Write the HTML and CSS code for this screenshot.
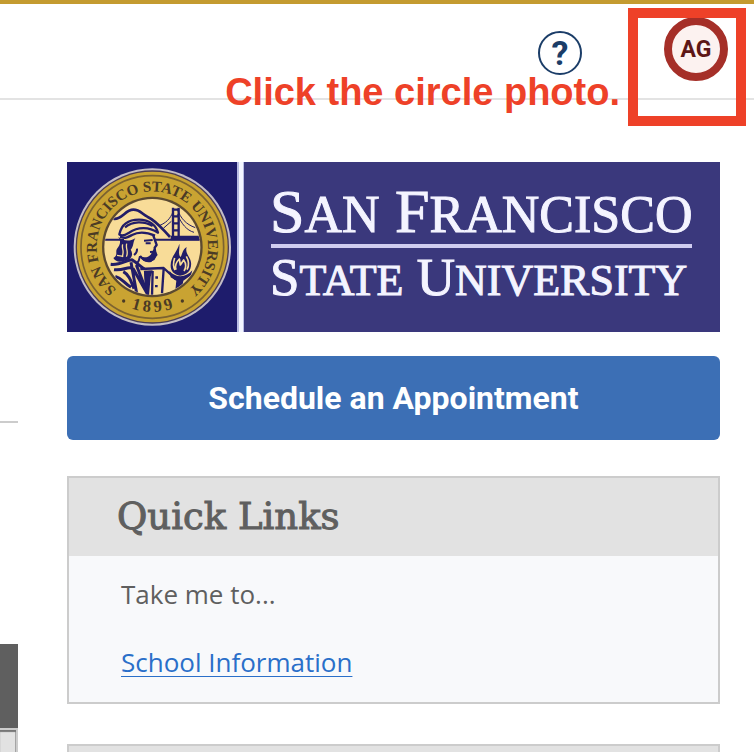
FILE: index.html
```html
<!DOCTYPE html>
<html lang="en">

<head>
    <meta charset="UTF-8">
    <meta name="viewport" content="width=device-width, initial-scale=1.0">
    <title>Home</title>
    <link rel="stylesheet" href="styles.css">
</head>

<body>

    <!-- top bar -->

    <header class="topbar">
        <button class="help" type="button" aria-label="Help">?</button>
        <button class="avatar" type="button" aria-label="Account menu">AG</button>
    </header>

    <!-- instructions over the top bar -->

    <p class="callout">Click the circle photo.</p>
    <div class="highlight"></div>

    <div class="page">

        <!-- end of the main column -->

        <main class="content">
            <div class="rule"></div>
            <div class="table-head"></div>
            <div class="table-body"></div>
        </main>

        <aside class="sidebar">
            <svg class="logo" viewBox="0 0 653 170" role="img" aria-label="San Francisco State University">
                <rect width="653" height="170" fill="#3a387c" />
                <rect width="170" height="170" fill="#1e1c6c" />
                <rect x="170" width="7" height="170" fill="#b9bde4" />
                <rect x="172" width="4" height="170" fill="#f4f6ff" />

                <!-- seal -->
                <svg x="-7" y="-7" width="190" height="185" viewBox="0 0 570 555">
                    <defs>
                        <path id="ring" d="M181 413A167 167 0 1 1 373 413" />
                        <path id="ring-low" d="M82 276A195 195 0 0 0 472 276" />
                        <clipPath id="inside">
                            <circle cx="277" cy="276" r="143" />
                        </clipPath>
                    </defs>
                    <circle cx="277" cy="276" r="236" fill="#c3bcc6" />
                    <circle cx="277" cy="276" r="230" fill="#4b3c55" />
                    <circle cx="277" cy="276" r="226" fill="#c9a332" />
                    <circle cx="277" cy="276" r="214" fill="none" stroke="#7c6330" stroke-width="5" />
                    <circle cx="277" cy="276" r="151" fill="#5b4930" />
                    <circle cx="277" cy="276" r="144" fill="#f8dc98" />
                    <g clip-path="url(#inside)" fill="none" stroke="#221d68" stroke-linejoin="round">
                        <path d="M125 254H192M285 254H425" stroke-width="6" />
                        <path d="M160 191C185 196 195 164 220 164C240 164 245 176 262 185C290 198 305 220 330 246" stroke-width="8" />
                        <path d="M300 211C325 200 334 185 342 163M352 163C362 190 378 208 406 218M352 178C365 207 380 226 402 232M310 220L334 199" stroke-width="3" />
                        <path d="M339 158V254M356 158V254M337 164H358M337 184H358M337 205H358M337 226H358" stroke-width="7" />
                        <path d="M332 242H422V256H332Z" fill="#221d68" stroke="none" />
                        <!-- helmet and hair -->
                        <path d="M178 238C184 210 205 194 237 194C268 194 288 211 294 233C268 216 235 214 207 233C196 240 184 244 178 238Z" fill="#f8dc98" stroke-width="7" />
                        <path d="M195 217C218 198 252 198 278 213M180 245C196 252 205 246 216 240C240 227 264 233 285 242" stroke-width="7" />
                        <path d="M174 246C186 260 178 271 172 280C164 292 176 299 160 309C170 326 189 319 202 315C220 309 218 292 212 284C222 275 218 262 226 250C208 261 190 258 174 246Z" fill="#221d68" stroke="none" />
                        <path d="M188 268C184 283 195 286 186 306M200 266C196 282 207 290 199 305M171 301L190 304" stroke="#f8dc98" stroke-width="4" />
                        <!-- face and neck -->
                        <path d="M280 242L290 270L284 278L286 297C286 308 280 316 267 316C257 318 247 311 240 303" stroke-width="7" />
                        <path d="M252 257L278 255M257 265H272M270 291L283 290M231 281C232 290 228 296 222 300M240 303C239 313 236 320 229 329" stroke-width="6" />
                        <path d="M283 278L293 300L274 321C255 324 247 318 240 304C253 309 265 307 272 299Z" fill="#221d68" stroke="none" />
                        <!-- robe -->
                        <path d="M152 328C179 332 201 314 216 314C229 322 240 333 253 342M162 344C194 348 206 330 220 342L264 420M213 322L230 415M229 330L257 402M166 364C187 370 190 383 213 397M190 350C208 360 213 379 222 401" stroke-width="9" />
                        <path d="M241 342L311 339L348 373M255 348L264 425M278 348L276 423M311 341L306 415" stroke-width="7" />
                        <path d="M252 347L278 346L272 365L267 422L254 391Z" fill="#221d68" stroke="none" />
                        <path d="M290 364V371M289 390V397" stroke-width="8" />
                        <!-- torch -->
                        <path d="M358 266C354 286 332 305 332 330C331 348 342 359 360 362C382 361 396 345 393 322C391 305 374 296 380 276C366 284 367 302 361 306C353 295 360 284 358 266Z" fill="#221d68" stroke="none" />
                        <path d="M348 344C343 330 350 320 358 312L361 330L371 315C380 326 378 340 372 348M344 309C339 324 341 338 345 345M379 304C388 320 386 335 381 344" stroke="#f8dc98" stroke-width="5" />
                        <path d="M328 347C346 370 380 368 397 346L393 361L370 377L364 410L346 405L349 377L332 367Z" fill="#221d68" stroke="none" />
                    </g>
                    <text class="seal-text"><textPath href="#ring" startOffset="50%">SAN FRANCISCO STATE UNIVERSITY</textPath></text>
                    <text class="seal-year"><textPath href="#ring-low" startOffset="50%">1&thinsp;8&thinsp;9&thinsp;9</textPath></text>
                    <circle cx="191" cy="438" r="5" fill="#4b3b25" />
                    <circle cx="367" cy="438" r="5" fill="#4b3b25" />
                </svg>

                <!-- wordmark -->
                <text class="word" x="203" y="70"><tspan font-size="62">S</tspan><tspan font-size="52">AN</tspan><tspan font-size="62"> F</tspan><tspan font-size="52">RANCISCO</tspan></text>
                <rect x="204" y="82" width="421" height="4" fill="#d0cdf0" />
                <text class="word" x="203" y="133"><tspan font-size="53">S</tspan><tspan font-size="44">TATE</tspan><tspan font-size="53"> U</tspan><tspan font-size="44">NIVERSITY</tspan></text>
            </svg>

            <button class="schedule" type="button">Schedule an Appointment</button>

            <section class="card">
                <h2>Quick Links</h2>
                <div class="card-body">
                    <p>Take me to...</p>
                    <a href="#">School Information</a>
                </div>
            </section>

            <section class="card">
                <h2></h2>
            </section>
        </aside>

    </div>

</body>

</html>
```

FILE: styles.css
```css
* {
    margin: 0;
    padding: 0;
    box-sizing: border-box;
}

html,
body {
    height: 100%;
}

body {
    position: relative;
    display: flex;
    flex-direction: column;
    overflow: hidden;
    background-color: #fff;
    font-family: "Open Sans", "Noto Sans", sans-serif;
    color: #5f5f5f;
}

/* top bar */

.topbar {
    display: flex;
    justify-content: flex-end;
    align-items: flex-start;
    gap: 82px;
    flex: none;
    height: 100px;
    padding: 13px 26px 0 0;
    border-top: 4px solid #c49b30;
    border-bottom: 2px solid #e3e3e3;
}

.topbar button {
    border-radius: 50%;
    font-family: Roboto, sans-serif;
    font-weight: bold;
    cursor: pointer;
}

.help {
    width: 44px;
    height: 44px;
    margin-top: 14px;
    border: 2px solid #1b3d68;
    background-color: #fff;
    color: #1b3d68;
    font-size: 34px;
    line-height: 40px;
}

.avatar {
    width: 64px;
    height: 64px;
    border: 8px solid #a52f28;
    background-color: #fcf2f0;
    color: #5e1716;
    font-size: 23px;
}

.callout {
    position: absolute;
    top: 70px;
    right: 134px;
    font-family: "Liberation Sans", Arial, sans-serif;
    font-size: 38px;
    font-weight: bold;
    line-height: 44px;
    color: #ee4128;
    white-space: nowrap;
}

.highlight {
    position: absolute;
    top: 8px;
    right: 8px;
    width: 118px;
    height: 118px;
    border: 10px solid #ee4128;
    pointer-events: none;
}

/* columns */

.page {
    display: grid;
    grid-template-columns: 18px 1fr;
    gap: 49px;
    flex: 1;
    min-height: 0;
    padding-right: 34px;
    overflow: hidden;
}

.content {
    display: flex;
    flex-direction: column;
    padding-top: 321px;
}

.rule {
    height: 2px;
    margin-bottom: 221px;
    background-color: #ccc;
}

.table-head {
    height: 84px;
    background-color: #5f5f5f;
}

.table-body {
    flex: 1;
    min-height: 24px;
    border-top: 2px solid #ccc;
    border-right: 2px solid #ccc;
    background-color: #e2e2e2;
    box-shadow: inset 0 2px 1px #777, inset -1px 0 #aaa;
}

.sidebar {
    padding-top: 62px;
}

/* logo */

.logo {
    display: block;
    width: 100%;
    margin-bottom: 24px;
}

.word {
    font-family: "Liberation Serif", serif;
    fill: #f4f4ff;
    stroke: #f4f4ff;
    stroke-width: 1px;
}

.seal-text,
.seal-year {
    font-family: "Liberation Serif", serif;
    font-weight: bold;
    font-size: 45px;
    fill: #4b3b25;
    text-anchor: middle;
}

.seal-year {
    font-size: 50px;
}

/* sidebar */

.schedule {
    display: block;
    width: 100%;
    margin-bottom: 36px;
    padding: 22px;
    border: none;
    border-radius: 6px;
    background-color: #3c6fb5;
    color: #fff;
    font-family: Roboto, sans-serif;
    font-size: 32px;
    font-weight: bold;
    line-height: 40px;
    cursor: pointer;
}

.card {
    margin-bottom: 40px;
    border: 2px solid #ccc;
    background-color: #f8f9fb;
}

.card h2 {
    min-height: 78px;
    padding: 16px 48px;
    background-color: #e2e2e2;
    font-family: "Roboto Slab", "DejaVu Serif", serif;
    font-size: 37px;
    font-weight: normal;
    line-height: 46px;
    -webkit-text-stroke: 1px #5f5f5f;
}

.card-body {
    padding: 20px 52px 22px;
    font-size: 26px;
    line-height: 36px;
}

.card-body p {
    margin-bottom: 32px;
}

.card-body a {
    color: #2a6fc9;
    text-underline-offset: 4px;
    text-decoration-thickness: 1px;
}
```
